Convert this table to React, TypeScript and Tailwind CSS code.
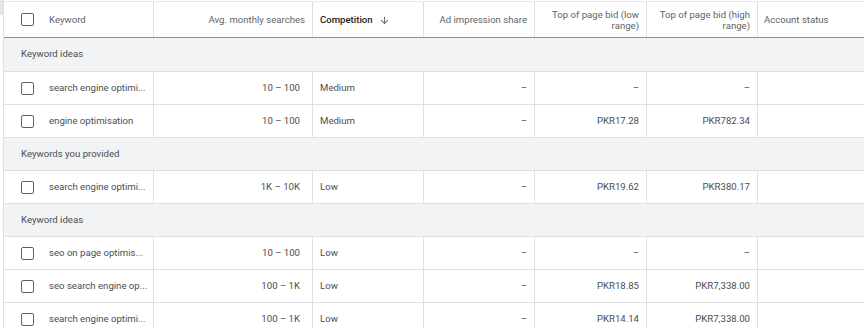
import React from 'react';

type Row =
  | { kind: 'group'; label: string; tall?: boolean }
  | { kind: 'data'; keyword: string; searches: string; competition: string; share: string; low: string; high: string };

const rows: Row[] = [
  { kind: 'group', label: 'Keyword ideas', tall: true },
  { kind: 'data', keyword: 'search engine optimi...', searches: '10 – 100', competition: 'Medium', share: '–', low: '–', high: '–' },
  { kind: 'data', keyword: 'engine optimisation', searches: '10 – 100', competition: 'Medium', share: '–', low: 'PKR17.28', high: 'PKR782.34' },
  { kind: 'group', label: 'Keywords you provided' },
  { kind: 'data', keyword: 'search engine optimi...', searches: '1K – 10K', competition: 'Low', share: '–', low: 'PKR19.62', high: 'PKR380.17' },
  { kind: 'group', label: 'Keyword ideas' },
  { kind: 'data', keyword: 'seo on page optimis...', searches: '10 – 100', competition: 'Low', share: '–', low: '–', high: '–' },
  { kind: 'data', keyword: 'seo search engine op...', searches: '100 – 1K', competition: 'Low', share: '–', low: 'PKR18.85', high: 'PKR7,338.00' },
  { kind: 'data', keyword: 'search engine optimi...', searches: '100 – 1K', competition: 'Low', share: '–', low: 'PKR14.14', high: 'PKR7,338.00' },
];

const cols = 'grid grid-cols-[150px_159px_111px_111px_112px_111px_1fr]';

const Checkbox = () => (
  <span className="block w-[13px] h-[13px] rounded-[2px] border-[1.5px] border-[#5f6368] bg-white shrink-0" />
);

const SortArrow = () => (
  <svg width="11" height="11" viewBox="0 0 24 24" className="ml-[6px] mt-[2px]">
    <path fill="#5f6368" d="M20 12l-1.41-1.41L13 16.17V4h-2v12.17l-5.58-5.59L4 12l8 8 8-8z" />
  </svg>
);

export default function App() {
  return (
    <div className="w-[864px] h-[328px] overflow-hidden bg-white flex font-['Roboto','Liberation_Sans',sans-serif] text-[9.6px]">
      {/* left edge strip */}
      <div className="w-[3px] shrink-0 flex flex-col">
        <div className="h-[15px] bg-[#e3e5e8]" />
      </div>
      <div className="flex-1 border-l border-[#e0e0e0] pt-px">
        {/* header */}
        <div className={`${cols} h-[37px] border-t border-b border-t-[#e8e8e8] border-b-[#8d9196] text-[#5f6368] leading-[11px]`}>
          <div className="flex items-center border-r border-[#e0e0e0] pl-[17px]">
            <Checkbox />
            <span className="ml-[15px]">Keyword</span>
          </div>
          <div className="flex items-center justify-end border-r border-[#e0e0e0] pr-[7px]">Avg. monthly searches</div>
          <div className="flex items-center border-r border-[#e0e0e0] pl-[7px] font-medium text-[#202124]">
            Competition
            <SortArrow />
          </div>
          <div className="flex items-center justify-end border-r border-[#e0e0e0] pr-[7px]">Ad impression share</div>
          <div className="flex items-center justify-end text-right border-r border-[#e0e0e0] pr-[7px]">
            Top of page bid (low
            <br />
            range)
          </div>
          <div className="flex items-center justify-end text-right border-r border-[#e0e0e0] pr-[7px]">
            Top of page bid (high
            <br />
            range)
          </div>
          <div className="flex items-center pl-[6px]">Account status</div>
        </div>

        {rows.map((r, i) =>
          r.kind === 'group' ? (
            <div
              key={i}
              className={`flex items-center ${r.tall ? 'h-[34px]' : 'h-[33px]'} bg-[#f1f3f4] border-b border-[#e0e0e0] pl-[17px] text-[#4a4e52]`}
            >
              {r.label}
            </div>
          ) : (
            <div key={i} className={`${cols} h-[33px] border-b border-[#e0e0e0] text-[#4a4e52]`}>
              <div className="flex items-center border-r border-[#e0e0e0] pl-[17px]">
                <Checkbox />
                <span className="ml-[15px] whitespace-nowrap">{r.keyword}</span>
              </div>
              <div className="flex items-center justify-end border-r border-[#e0e0e0] pr-[12px]">{r.searches}</div>
              <div className="flex items-center border-r border-[#e0e0e0] pl-[7px]">{r.competition}</div>
              <div className="flex items-center justify-end border-r border-[#e0e0e0] pr-[7px]">{r.share}</div>
              <div className="flex items-center justify-end border-r border-[#e0e0e0] pr-[7px]">{r.low}</div>
              <div className="flex items-center justify-end border-r border-[#e0e0e0] pr-[7px]">{r.high}</div>
              <div />
            </div>
          )
        )}
      </div>
    </div>
  );
}
